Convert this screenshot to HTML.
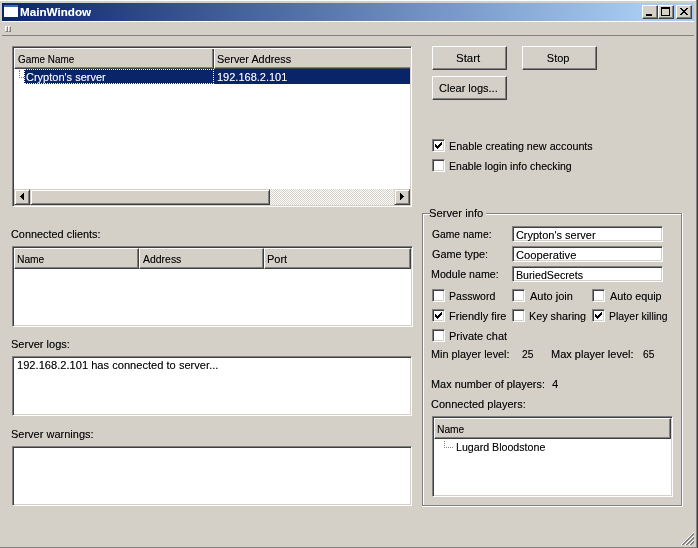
<!DOCTYPE html>
<html><head><meta charset="utf-8">
<style>
*{margin:0;padding:0;box-sizing:border-box}
html,body{width:698px;height:548px;overflow:hidden}
body{background:#D4D0C8;position:relative;-webkit-font-smoothing:antialiased;font-family:"Liberation Sans",sans-serif;font-size:11px;color:#000}
.a{position:absolute}
.t{position:absolute;white-space:pre;line-height:13px;transform-origin:0 0;filter:url(#thr)}
.btn{position:absolute;background:#D4D0C8;border:1px solid;border-color:#fff #404040 #404040 #fff;box-shadow:inset -1px -1px #808080}
.sunk{position:absolute;background:#fff;border:1px solid;border-color:#808080 #fff #fff #808080;box-shadow:inset 1px 1px #404040,inset -1px -1px #D4D0C8}
.chk{position:absolute;width:13px;height:13px;background:#fff;border:1px solid;border-color:#808080 #fff #fff #808080;box-shadow:inset 1px 1px #404040,inset -1px -1px #D4D0C8}
.hs{position:absolute;background:#D4D0C8;border:1px solid;border-color:#fff #404040 #404040 #fff;box-shadow:inset -1px -1px #808080}
.ck{position:absolute;left:2px;top:2px}
.pnl{position:absolute;background:#D4D0C8;border:1px solid;border-color:#D4D0C8 #404040 #404040 #D4D0C8;box-shadow:inset 1px 1px #fff,inset -1px -1px #808080}
</style></head><body>
<svg width="0" height="0" style="position:absolute"><filter id="thr" x="-10%" y="-20%" width="120%" height="140%"><feComponentTransfer><feFuncA type="table" tableValues="0 0.62 1"/></feComponentTransfer></filter></svg>

<!-- window frame -->
<div class="a" style="left:0;top:0;width:696px;height:1px;background:#fff"></div>
<div class="a" style="left:2px;top:21px;width:692px;height:1px;background:#fff"></div>
<div class="a" style="left:696px;top:0;width:1px;height:547px;background:#808080"></div>
<div class="a" style="left:697px;top:0;width:1px;height:548px;background:#404040"></div>
<div class="a" style="left:0;top:547px;width:697px;height:1px;background:#808080"></div>

<!-- title bar -->
<div class="a" style="left:2px;top:3px;width:692px;height:18px;background:linear-gradient(to right,#0A246A 0,#A6CAF0 638px)"></div>
<div class="a" style="left:4px;top:5px;width:14px;height:12px;background:#fff;border-top:2px solid #3A6EA5"></div>
<div class="t" id="t_title" style="left:20.41px;top:6px;transform:scaleX(1.0606);color:#fff;font-weight:bold">MainWindow</div>
<div class="btn" style="left:642px;top:5px;width:16px;height:14px"><div class="a" style="left:3px;top:8px;width:6px;height:2px;background:#000"></div></div>
<div class="btn" style="left:658px;top:5px;width:16px;height:14px"><div class="a" style="left:2px;top:1px;width:9px;height:9px;border:1px solid #000;border-top-width:2px"></div></div>
<div class="btn" style="left:676px;top:5px;width:16px;height:14px"><svg class="a" style="left:3px;top:2px" width="8" height="7" shape-rendering="crispEdges"><rect x="0" y="0" width="1" height="1"/><rect x="1" y="0" width="1" height="1"/><rect x="6" y="0" width="1" height="1"/><rect x="7" y="0" width="1" height="1"/><rect x="1" y="1" width="1" height="1"/><rect x="2" y="1" width="1" height="1"/><rect x="5" y="1" width="1" height="1"/><rect x="6" y="1" width="1" height="1"/><rect x="2" y="2" width="1" height="1"/><rect x="3" y="2" width="1" height="1"/><rect x="4" y="2" width="1" height="1"/><rect x="5" y="2" width="1" height="1"/><rect x="3" y="3" width="1" height="1"/><rect x="4" y="3" width="1" height="1"/><rect x="2" y="4" width="1" height="1"/><rect x="3" y="4" width="1" height="1"/><rect x="4" y="4" width="1" height="1"/><rect x="5" y="4" width="1" height="1"/><rect x="1" y="5" width="1" height="1"/><rect x="2" y="5" width="1" height="1"/><rect x="5" y="5" width="1" height="1"/><rect x="6" y="5" width="1" height="1"/><rect x="0" y="6" width="1" height="1"/><rect x="1" y="6" width="1" height="1"/><rect x="6" y="6" width="1" height="1"/><rect x="7" y="6" width="1" height="1"/></svg></div>

<!-- toolbar handle + separator -->
<div class="a" style="left:5px;top:26px;width:3px;height:6px;border:1px solid;border-color:#fff #808080 #808080 #fff"></div>
<div class="a" style="left:8px;top:26px;width:3px;height:6px;border:1px solid;border-color:#fff #808080 #808080 #fff"></div>
<div class="a" style="left:2px;top:35px;width:692px;height:1px;background:#808080"></div>

<!-- game list -->
<div class="sunk" style="left:12px;top:46px;width:400px;height:161px"></div>
<div class="hs" style="left:14px;top:48px;width:200px;height:21px"></div>
<div class="hs" style="left:214px;top:48px;width:196px;height:21px;border-right:0;box-shadow:inset 0 -1px #808080"></div>
<div class="t" id="t_h_game" style="left:18.08px;top:53px;transform:scaleX(0.9022);">Game Name</div>
<div class="t" id="t_h_addr" style="left:217.01px;top:53px;transform:scaleX(0.9865);">Server Address</div>
<div class="a" style="left:14px;top:48px;width:396px;height:1px;background:#fff"></div>
<!-- selected row -->
<div class="a" style="left:24px;top:69px;width:386px;height:15px;background:#0A246A"></div>
<div class="a" style="left:24px;top:69px;width:190px;height:15px;border:1px dotted #fff"></div>
<div class="t" id="t_sel1" style="left:25.81px;top:71px;transform:scaleX(1.0002);color:#fff">Crypton's server</div>
<div class="t" id="t_sel2" style="left:216.78px;top:71px;transform:scaleX(1.0002);color:#fff">192.168.2.101</div>
<div class="a" style="left:19px;top:70px;width:5px;height:8px;border-left:1px dotted #808080;border-bottom:1px dotted #808080"></div>
<!-- h scrollbar -->
<div class="a" style="left:14px;top:189px;width:396px;height:16px;background-color:#fff;background-image:linear-gradient(45deg,#D4D0C8 25%,transparent 25%,transparent 75%,#D4D0C8 75%),linear-gradient(45deg,#D4D0C8 25%,transparent 25%,transparent 75%,#D4D0C8 75%);background-size:2px 2px;background-position:0 0,1px 1px"></div>
<div class="pnl" style="left:14px;top:189px;width:16px;height:16px"><svg class="a" style="left:5px;top:3px" width="4" height="7" shape-rendering="crispEdges"><rect x="0" y="3" width="1" height="1"/><rect x="1" y="2" width="1" height="3"/><rect x="2" y="1" width="1" height="5"/><rect x="3" y="0" width="1" height="7"/></svg></div>
<div class="pnl" style="left:30px;top:189px;width:240px;height:16px"></div>
<div class="pnl" style="left:394px;top:189px;width:16px;height:16px"><svg class="a" style="left:5px;top:3px" width="4" height="7" shape-rendering="crispEdges"><rect x="0" y="0" width="1" height="7"/><rect x="1" y="1" width="1" height="5"/><rect x="2" y="2" width="1" height="3"/><rect x="3" y="3" width="1" height="1"/></svg></div>

<!-- connected clients -->
<div class="t" id="t_cc" style="left:10.83px;top:228px;transform:scaleX(0.9899);">Connected clients:</div>
<div class="sunk" style="left:12px;top:246px;width:401px;height:81px"></div>
<div class="hs" style="left:14px;top:248px;width:125px;height:21px"></div>
<div class="hs" style="left:139px;top:248px;width:125px;height:21px"></div>
<div class="hs" style="left:264px;top:248px;width:147px;height:21px"></div>
<div class="t" id="t_h_name" style="left:17.07px;top:253px;transform:scaleX(0.9286);">Name</div>
<div class="t" id="t_h_address" style="left:143.00px;top:253px;transform:scaleX(0.9500);">Address</div>
<div class="t" id="t_h_port" style="left:267.00px;top:253px;">Port</div>

<!-- server logs -->
<div class="t" id="t_slogs" style="left:10.81px;top:338px;transform:scaleX(1.0042);">Server logs:</div>
<div class="sunk" style="left:12px;top:356px;width:400px;height:60px"></div>
<div class="t" id="t_logtxt" style="left:16.79px;top:359px;transform:scaleX(1.0102);">192.168.2.101 has connected to server...</div>

<!-- server warnings -->
<div class="t" id="t_swarn" style="left:10.92px;top:428px;transform:scaleX(1.0003);">Server warnings:</div>
<div class="sunk" style="left:12px;top:446px;width:400px;height:60px"></div>

<!-- buttons -->
<div class="btn" style="left:432px;top:46px;width:75px;height:24px"></div>
<div class="t" id="t_start" style="left:455.95px;top:52px;transform:scaleX(1.0455);">Start</div>
<div class="btn" style="left:522px;top:46px;width:75px;height:24px"></div>
<div class="t" id="t_stop" style="left:546.80px;top:52px;">Stop</div>
<div class="btn" style="left:432px;top:76px;width:75px;height:24px"></div>
<div class="t" id="t_clear" style="left:439.00px;top:82px;transform:scaleX(1.0004);">Clear logs...</div>

<!-- checkboxes -->
<div class="chk" style="left:432px;top:139px"><svg class="ck" width="7" height="7" shape-rendering="crispEdges"><rect x="6" y="0" width="1" height="1"/><rect x="5" y="1" width="1" height="1"/><rect x="6" y="1" width="1" height="1"/><rect x="0" y="2" width="1" height="1"/><rect x="4" y="2" width="1" height="1"/><rect x="5" y="2" width="1" height="1"/><rect x="6" y="2" width="1" height="1"/><rect x="0" y="3" width="1" height="1"/><rect x="1" y="3" width="1" height="1"/><rect x="3" y="3" width="1" height="1"/><rect x="4" y="3" width="1" height="1"/><rect x="5" y="3" width="1" height="1"/><rect x="0" y="4" width="1" height="1"/><rect x="1" y="4" width="1" height="1"/><rect x="2" y="4" width="1" height="1"/><rect x="3" y="4" width="1" height="1"/><rect x="4" y="4" width="1" height="1"/><rect x="1" y="5" width="1" height="1"/><rect x="2" y="5" width="1" height="1"/><rect x="3" y="5" width="1" height="1"/><rect x="2" y="6" width="1" height="1"/></svg></div>
<div class="t" id="t_en1" style="left:449.04px;top:140px;transform:scaleX(0.9795);">Enable creating new accounts</div>
<div class="chk" style="left:432px;top:159px"></div>
<div class="t" id="t_en2" style="left:449.05px;top:160px;transform:scaleX(0.9604);">Enable login info checking</div>

<!-- group box -->
<div class="a" style="left:423px;top:214px;width:260px;height:293px;border:1px solid #fff;border-right-color:#fff"></div>
<div class="a" style="left:422px;top:213px;width:260px;height:293px;border:1px solid #808080"></div>
<div class="a" style="left:422px;top:506px;width:1px;height:1px;background:#fff"></div>
<div class="a" style="left:682px;top:213px;width:1px;height:1px;background:#fff"></div>
<div class="a" style="left:430px;top:208px;width:56px;height:10px;background:#D4D0C8"></div>
<div class="t" id="t_sinfo" style="left:429.47px;top:207px;transform:scaleX(1.0197);">Server info</div>

<div class="t" id="t_gname" style="left:431.86px;top:228px;transform:scaleX(0.9359);">Game name:</div>
<div class="sunk" style="left:512px;top:226px;width:151px;height:16px"></div>
<div class="t" id="t_le1" style="left:515.88px;top:229px;">Crypton's server</div>
<div class="t" id="t_gtype" style="left:431.77px;top:248px;transform:scaleX(0.9862);">Game type:</div>
<div class="sunk" style="left:512px;top:246px;width:151px;height:16px"></div>
<div class="t" id="t_le2" style="left:515.89px;top:249px;transform:scaleX(1.0176);">Cooperative</div>
<div class="t" id="t_mname" style="left:430.84px;top:268px;transform:scaleX(0.9722);">Module name:</div>
<div class="sunk" style="left:512px;top:266px;width:151px;height:16px"></div>
<div class="t" id="t_le3" style="left:515.93px;top:269px;transform:scaleX(0.9708);">BuriedSecrets</div>

<div class="chk" style="left:432px;top:289px"></div><div class="t" id="t_pw" style="left:449.04px;top:290px;transform:scaleX(0.9574);">Password</div>
<div class="chk" style="left:512px;top:289px"></div><div class="t" id="t_aj" style="left:530.00px;top:290px;transform:scaleX(1.0004);">Auto join</div>
<div class="chk" style="left:592px;top:289px"></div><div class="t" id="t_ae" style="left:610.00px;top:290px;transform:scaleX(0.9808);">Auto equip</div>
<div class="chk" style="left:432px;top:309px"><svg class="ck" width="7" height="7" shape-rendering="crispEdges"><rect x="6" y="0" width="1" height="1"/><rect x="5" y="1" width="1" height="1"/><rect x="6" y="1" width="1" height="1"/><rect x="0" y="2" width="1" height="1"/><rect x="4" y="2" width="1" height="1"/><rect x="5" y="2" width="1" height="1"/><rect x="6" y="2" width="1" height="1"/><rect x="0" y="3" width="1" height="1"/><rect x="1" y="3" width="1" height="1"/><rect x="3" y="3" width="1" height="1"/><rect x="4" y="3" width="1" height="1"/><rect x="5" y="3" width="1" height="1"/><rect x="0" y="4" width="1" height="1"/><rect x="1" y="4" width="1" height="1"/><rect x="2" y="4" width="1" height="1"/><rect x="3" y="4" width="1" height="1"/><rect x="4" y="4" width="1" height="1"/><rect x="1" y="5" width="1" height="1"/><rect x="2" y="5" width="1" height="1"/><rect x="3" y="5" width="1" height="1"/><rect x="2" y="6" width="1" height="1"/></svg></div><div class="t" id="t_ff" style="left:449.02px;top:310px;transform:scaleX(1.0004);">Friendly fire</div>
<div class="chk" style="left:512px;top:309px"></div><div class="t" id="t_ks" style="left:529.04px;top:310px;transform:scaleX(0.9824);">Key sharing</div>
<div class="chk" style="left:592px;top:309px"><svg class="ck" width="7" height="7" shape-rendering="crispEdges"><rect x="6" y="0" width="1" height="1"/><rect x="5" y="1" width="1" height="1"/><rect x="6" y="1" width="1" height="1"/><rect x="0" y="2" width="1" height="1"/><rect x="4" y="2" width="1" height="1"/><rect x="5" y="2" width="1" height="1"/><rect x="6" y="2" width="1" height="1"/><rect x="0" y="3" width="1" height="1"/><rect x="1" y="3" width="1" height="1"/><rect x="3" y="3" width="1" height="1"/><rect x="4" y="3" width="1" height="1"/><rect x="5" y="3" width="1" height="1"/><rect x="0" y="4" width="1" height="1"/><rect x="1" y="4" width="1" height="1"/><rect x="2" y="4" width="1" height="1"/><rect x="3" y="4" width="1" height="1"/><rect x="4" y="4" width="1" height="1"/><rect x="1" y="5" width="1" height="1"/><rect x="2" y="5" width="1" height="1"/><rect x="3" y="5" width="1" height="1"/><rect x="2" y="6" width="1" height="1"/></svg></div><div class="t" id="t_pk" style="left:609.03px;top:310px;transform:scaleX(0.9504);">Player killing</div>
<div class="chk" style="left:432px;top:329px"></div><div class="t" id="t_pc" style="left:449.00px;top:330px;">Private chat</div>

<div class="t" id="t_minl" style="left:430.99px;top:348px;transform:scaleX(0.9883);">Min player level:</div>
<div class="t" id="t_n25" style="left:521.63px;top:348px;transform:scaleX(0.9319);">25</div>
<div class="t" id="t_maxl" style="left:550.68px;top:348px;transform:scaleX(0.9998);">Max player level:</div>
<div class="t" id="t_n65" style="left:642.69px;top:348px;transform:scaleX(0.9320);">65</div>
<div class="t" id="t_maxn" style="left:431.04px;top:378px;transform:scaleX(0.9914);">Max number of players:</div>
<div class="t" id="t_n4" style="left:552.45px;top:378px;transform:scaleX(1.0198);">4</div>
<div class="t" id="t_cp" style="left:431.00px;top:398px;">Connected players:</div>

<div class="sunk" style="left:432px;top:416px;width:241px;height:81px"></div>
<div class="hs" style="left:434px;top:418px;width:237px;height:21px"></div>
<div class="t" id="t_h_name2" style="left:436.88px;top:423px;transform:scaleX(0.9300);">Name</div>
<div class="a" style="left:444px;top:441px;width:9px;height:7px;border-left:1px dotted #808080;border-bottom:1px dotted #808080"></div>
<div class="t" id="t_lugard" style="left:456.11px;top:441px;transform:scaleX(0.9670);">Lugard Bloodstone</div>

<!-- size grip -->
<svg class="a" style="left:681px;top:532px" width="13" height="13" shape-rendering="crispEdges"><rect x="0" y="12" width="1" height="1" fill="#fff"/><rect x="1" y="11" width="1" height="1" fill="#fff"/><rect x="2" y="10" width="1" height="1" fill="#fff"/><rect x="3" y="9" width="1" height="1" fill="#fff"/><rect x="4" y="8" width="1" height="1" fill="#fff"/><rect x="5" y="7" width="1" height="1" fill="#fff"/><rect x="6" y="6" width="1" height="1" fill="#fff"/><rect x="7" y="5" width="1" height="1" fill="#fff"/><rect x="8" y="4" width="1" height="1" fill="#fff"/><rect x="9" y="3" width="1" height="1" fill="#fff"/><rect x="10" y="2" width="1" height="1" fill="#fff"/><rect x="11" y="1" width="1" height="1" fill="#fff"/><rect x="12" y="0" width="1" height="1" fill="#fff"/><rect x="1" y="12" width="1" height="1" fill="#808080"/><rect x="2" y="11" width="1" height="1" fill="#808080"/><rect x="3" y="10" width="1" height="1" fill="#808080"/><rect x="4" y="9" width="1" height="1" fill="#808080"/><rect x="5" y="8" width="1" height="1" fill="#808080"/><rect x="6" y="7" width="1" height="1" fill="#808080"/><rect x="7" y="6" width="1" height="1" fill="#808080"/><rect x="8" y="5" width="1" height="1" fill="#808080"/><rect x="9" y="4" width="1" height="1" fill="#808080"/><rect x="10" y="3" width="1" height="1" fill="#808080"/><rect x="11" y="2" width="1" height="1" fill="#808080"/><rect x="12" y="1" width="1" height="1" fill="#808080"/><rect x="2" y="12" width="1" height="1" fill="#808080"/><rect x="3" y="11" width="1" height="1" fill="#808080"/><rect x="4" y="10" width="1" height="1" fill="#808080"/><rect x="5" y="9" width="1" height="1" fill="#808080"/><rect x="6" y="8" width="1" height="1" fill="#808080"/><rect x="7" y="7" width="1" height="1" fill="#808080"/><rect x="8" y="6" width="1" height="1" fill="#808080"/><rect x="9" y="5" width="1" height="1" fill="#808080"/><rect x="10" y="4" width="1" height="1" fill="#808080"/><rect x="11" y="3" width="1" height="1" fill="#808080"/><rect x="12" y="2" width="1" height="1" fill="#808080"/><rect x="4" y="12" width="1" height="1" fill="#fff"/><rect x="5" y="11" width="1" height="1" fill="#fff"/><rect x="6" y="10" width="1" height="1" fill="#fff"/><rect x="7" y="9" width="1" height="1" fill="#fff"/><rect x="8" y="8" width="1" height="1" fill="#fff"/><rect x="9" y="7" width="1" height="1" fill="#fff"/><rect x="10" y="6" width="1" height="1" fill="#fff"/><rect x="11" y="5" width="1" height="1" fill="#fff"/><rect x="12" y="4" width="1" height="1" fill="#fff"/><rect x="5" y="12" width="1" height="1" fill="#808080"/><rect x="6" y="11" width="1" height="1" fill="#808080"/><rect x="7" y="10" width="1" height="1" fill="#808080"/><rect x="8" y="9" width="1" height="1" fill="#808080"/><rect x="9" y="8" width="1" height="1" fill="#808080"/><rect x="10" y="7" width="1" height="1" fill="#808080"/><rect x="11" y="6" width="1" height="1" fill="#808080"/><rect x="12" y="5" width="1" height="1" fill="#808080"/><rect x="6" y="12" width="1" height="1" fill="#808080"/><rect x="7" y="11" width="1" height="1" fill="#808080"/><rect x="8" y="10" width="1" height="1" fill="#808080"/><rect x="9" y="9" width="1" height="1" fill="#808080"/><rect x="10" y="8" width="1" height="1" fill="#808080"/><rect x="11" y="7" width="1" height="1" fill="#808080"/><rect x="12" y="6" width="1" height="1" fill="#808080"/><rect x="8" y="12" width="1" height="1" fill="#fff"/><rect x="9" y="11" width="1" height="1" fill="#fff"/><rect x="10" y="10" width="1" height="1" fill="#fff"/><rect x="11" y="9" width="1" height="1" fill="#fff"/><rect x="12" y="8" width="1" height="1" fill="#fff"/><rect x="9" y="12" width="1" height="1" fill="#808080"/><rect x="10" y="11" width="1" height="1" fill="#808080"/><rect x="11" y="10" width="1" height="1" fill="#808080"/><rect x="12" y="9" width="1" height="1" fill="#808080"/><rect x="10" y="12" width="1" height="1" fill="#808080"/><rect x="11" y="11" width="1" height="1" fill="#808080"/><rect x="12" y="10" width="1" height="1" fill="#808080"/></svg>

</body></html>
